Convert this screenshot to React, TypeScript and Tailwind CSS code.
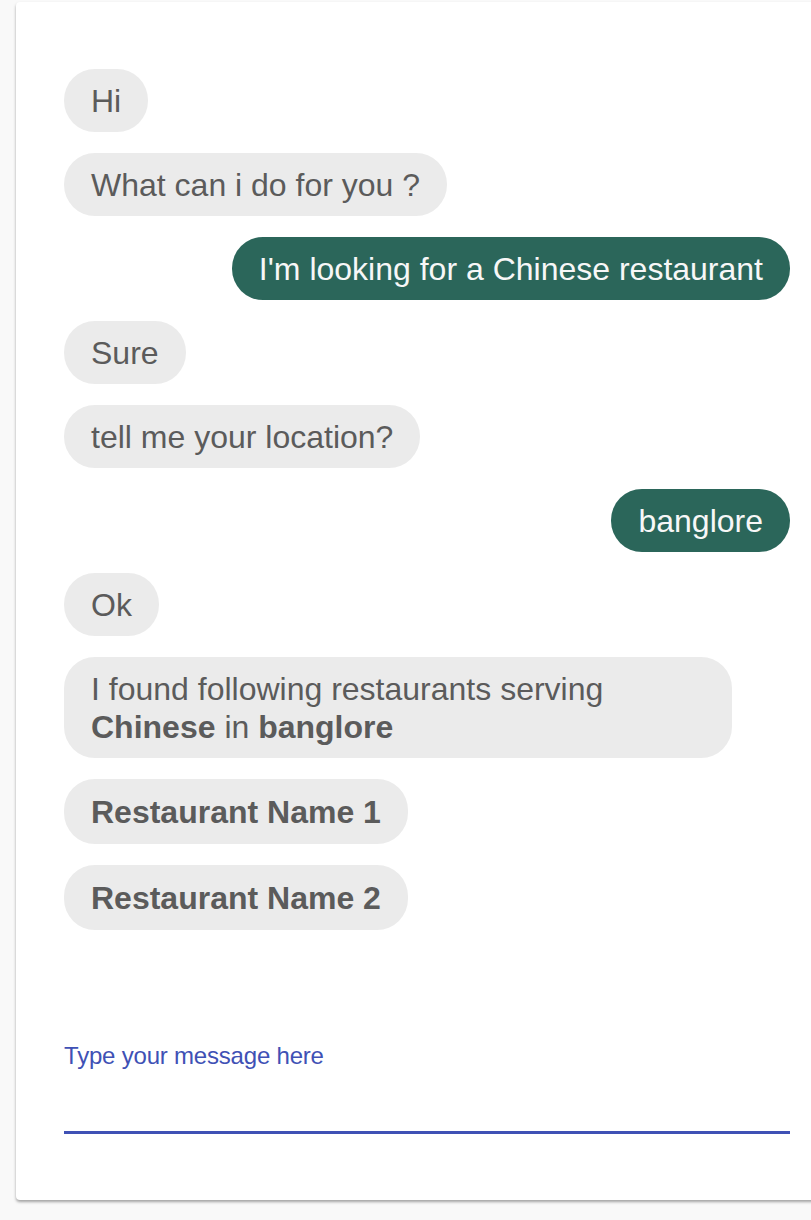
const messages: { from: "bot" | "me"; text: React.ReactNode; bold?: boolean }[] = [
  { from: "bot", text: "Hi" },
  { from: "bot", text: "What can i do for you ?" },
  { from: "me", text: "I'm looking for a Chinese restaurant" },
  { from: "bot", text: "Sure" },
  { from: "bot", text: "tell me your location?" },
  { from: "me", text: "banglore" },
  { from: "bot", text: "Ok" },
  {
    from: "bot",
    text: (
      <>
        I found following restaurants serving <b>Chinese</b> in <b>banglore</b>
      </>
    ),
  },
  { from: "bot", text: "Restaurant Name 1", bold: true },
  { from: "bot", text: "Restaurant Name 2", bold: true },
];

const Bubble = ({ from, text, bold }: (typeof messages)[number]) => {
  const mine = from === "me";
  return (
    <div className={mine ? "flex justify-end" : "flex justify-start"}>
      <div
        className={
          "max-w-[668px] rounded-[31px] px-[27px] text-[32px] leading-[38px] " +
          (mine ? "bg-[#2b665a] text-[#f7f7f7]" : "bg-[#ebebeb] text-[#5b5b5b]") +
          (bold ? " py-[13.5px] font-bold" : " py-[12.5px]")
        }
      >
        {text}
      </div>
    </div>
  );
};

export default function App() {
  return (
    <div className="min-h-[1220px] w-full overflow-hidden bg-[#f9f9f9] pt-[2px] font-['Liberation_Sans',Arial,sans-serif]">
      <div className="ml-4 w-[822px] rounded-[4px] bg-white px-12 pt-[67px] pb-[66px] shadow-[0_2px_3px_rgba(0,0,0,0.35)]">
        <div className="flex flex-col gap-[21px]">
          {messages.map((m, i) => (
            <Bubble key={i} {...m} />
          ))}
        </div>
        <div className="mt-[113px]">
          <label className="block text-[24px] leading-[26px] tracking-[-0.2px] text-[#3f51b5]">
            Type your message here
          </label>
          <input className="mt-[36px] block h-[26px] w-full bg-transparent text-[24px] outline-none" />
          <div className="h-[3px] w-full bg-[#3f51b5]" />
        </div>
      </div>
    </div>
  );
}
